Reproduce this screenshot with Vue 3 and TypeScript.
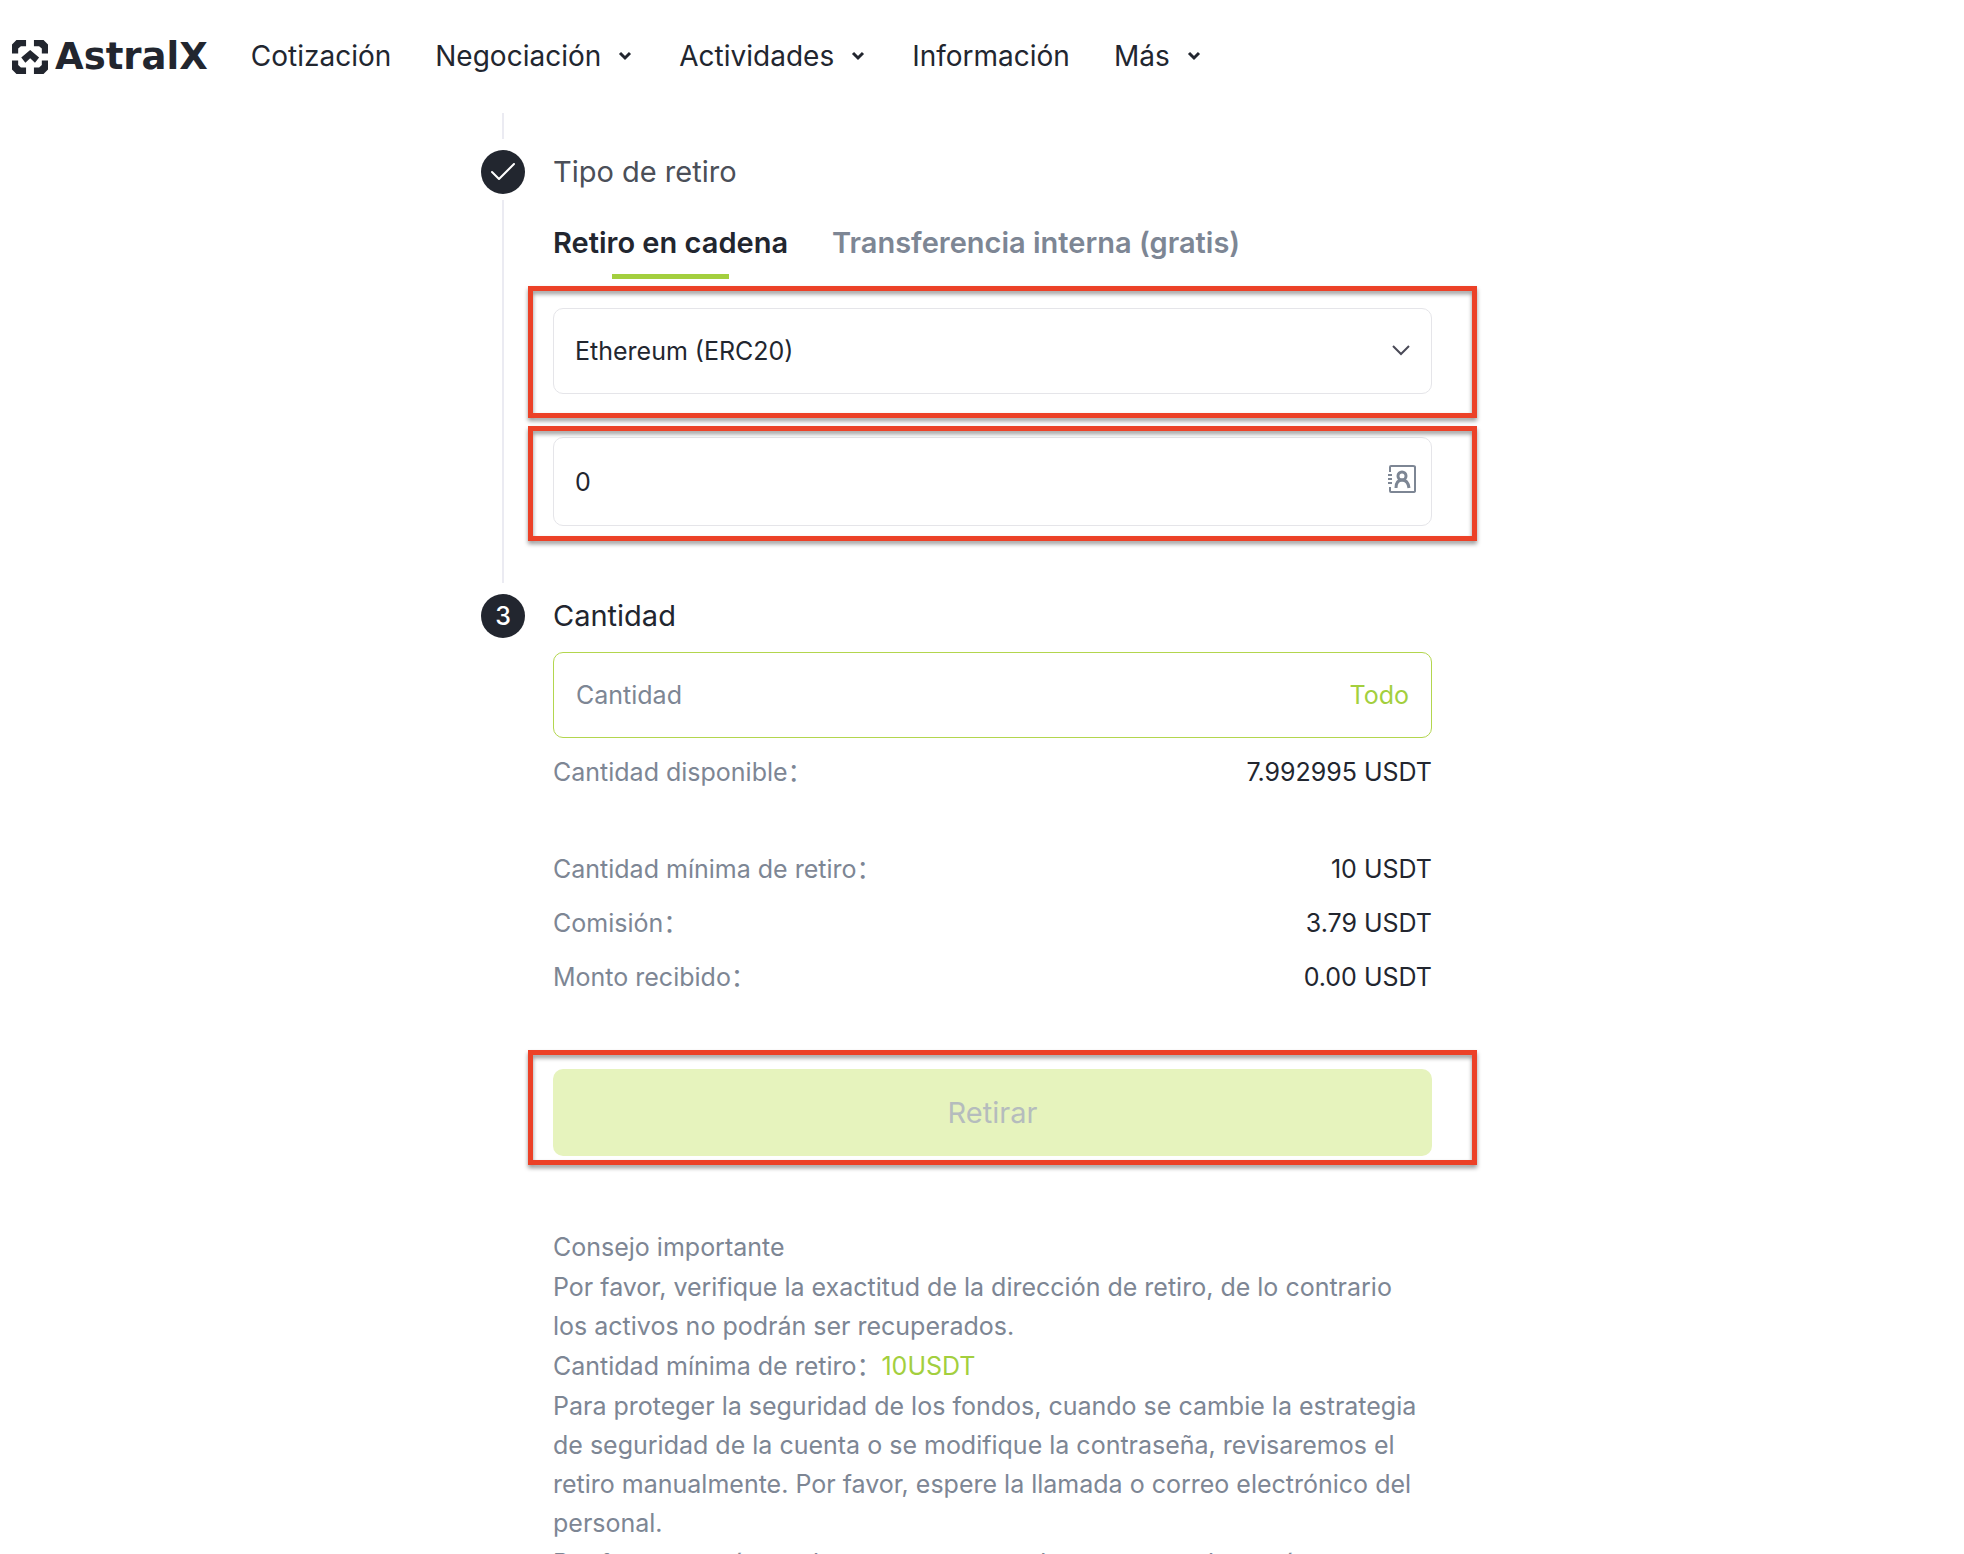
<script setup lang="ts">
import { ref } from 'vue'

interface NavItem {
  label: string
  menu: boolean
}

interface SummaryRow {
  label: string
  value: string
}

const navItems: NavItem[] = [
  { label: 'Cotización', menu: false },
  { label: 'Negociación', menu: true },
  { label: 'Actividades', menu: true },
  { label: 'Información', menu: false },
  { label: 'Más', menu: true },
]

const tabs: string[] = ['Retiro en cadena', 'Transferencia interna (gratis)']
const activeTab = ref(0)

const network = ref('Ethereum (ERC20)')
const address = ref('0')
const amount = ref('')

const available: SummaryRow = { label: 'Cantidad disponible：', value: '7.992995 USDT' }
const summary: SummaryRow[] = [
  { label: 'Cantidad mínima de retiro：', value: '10 USDT' },
  { label: 'Comisión：', value: '3.79 USDT' },
  { label: 'Monto recibido：', value: '0.00 USDT' },
]
</script>

<template>
  <div class="page">
    <header class="header">
      <a href="#" class="brand">
        <svg class="brand-mark" viewBox="39 63 105 99" aria-hidden="true">
          <path d="M39 76 52 63H80V81H65L57 88V102H39Z" />
          <path d="M144 76 131 63H103V81H118L126 88V102H144Z" />
          <path d="M39 149 52 162H80V143H65L57 136V123H39Z" />
          <path d="M144 149 131 162H103V143H118L126 136V123H144Z" />
          <path d="M92 92 118 114 106 129 92 116 78 129 66 114Z" />
        </svg>
        <span class="brand-name">AstralX</span>
      </a>
      <nav class="nav">
        <template v-for="item in navItems" :key="item.label">
          <button v-if="item.menu" type="button" class="nav-item">
            {{ item.label }}
            <svg class="nav-caret" viewBox="0 0 18 10" aria-hidden="true">
              <path d="M3 2 8 7 13 2" />
            </svg>
          </button>
          <a v-else href="#" class="nav-item">{{ item.label }}</a>
        </template>
      </nav>
    </header>

    <main class="steps">
      <div class="step">
        <div class="rail"><span class="rail-stub"></span></div>
      </div>

      <section class="step">
        <div class="rail">
          <span class="dot">
            <svg class="dot-check" viewBox="0 0 24 18" aria-label="Completado">
              <path d="M1 9 8 16 23 1" />
            </svg>
          </span>
          <span class="rail-line"></span>
        </div>
        <div class="step-body">
          <h2 class="step-title done">Tipo de retiro</h2>
          <div class="tabs" role="tablist">
            <button
              v-for="(tab, i) in tabs"
              :key="tab"
              type="button"
              role="tab"
              class="tab"
              :class="{ active: i === activeTab }"
              :aria-selected="i === activeTab"
              @click="activeTab = i"
            >
              {{ tab }}
            </button>
          </div>
          <div class="marked marked-network">
            <select v-model="network" class="field" aria-label="Red">
              <option>Ethereum (ERC20)</option>
            </select>
            <svg class="select-caret" viewBox="0 0 18 12" aria-hidden="true">
              <path d="M1 2 9 10 17 2" />
            </svg>
          </div>
          <div class="marked marked-address">
            <input v-model="address" type="text" class="field field-tall" aria-label="Dirección" />
            <button type="button" class="book" aria-label="Libreta de direcciones">
              <svg viewBox="0 0 28 30" aria-hidden="true">
                <path d="M2 8V3Q2 2 3 2H25Q27 2 27 3V27Q27 28 25 28H3Q2 28 2 27V23" />
                <path d="M0 11H4M0 15H4M0 19H4" />
                <g class="book-person">
                  <circle cx="14" cy="12" r="4" />
                  <path d="M8 24Q8 16 14 16T21 24" />
                </g>
              </svg>
            </button>
          </div>
        </div>
      </section>

      <section class="step">
        <div class="rail"><span class="dot">3</span></div>
        <div class="step-body">
          <h2 class="step-title">Cantidad</h2>
          <div class="amount">
            <input
              v-model="amount"
              type="text"
              class="amount-input"
              placeholder="Cantidad"
              aria-label="Cantidad"
            />
            <button type="button" class="all">Todo</button>
          </div>
          <dl class="summary summary-first">
            <div class="row">
              <dt>{{ available.label }}</dt>
              <dd>{{ available.value }}</dd>
            </div>
          </dl>
          <dl class="summary">
            <div v-for="row in summary" :key="row.label" class="row">
              <dt>{{ row.label }}</dt>
              <dd>{{ row.value }}</dd>
            </div>
          </dl>
          <div class="marked marked-submit">
            <button type="button" class="submit" disabled>Retirar</button>
          </div>
          <div class="tips">
            <p>Consejo importante</p>
            <p>
              Por favor, verifique la exactitud de la dirección de retiro, de lo contrario los
              activos no podrán ser recuperados.
            </p>
            <p>Cantidad mínima de retiro：<span class="accent">10USDT</span></p>
            <p>
              Para proteger la seguridad de los fondos, cuando se cambie la estrategia de seguridad
              de la cuenta o se modifique la contraseña, revisaremos el retiro manualmente. Por
              favor, espere la llamada o correo electrónico del personal.
            </p>
            <p>Por favor, asegúrese de que su computadora y navegador estén seguros.</p>
          </div>
        </div>
      </section>
    </main>
  </div>
</template>

<style>
body {
  margin: 0;
  background: #fff;
}
</style>

<style scoped>
.page {
  height: 100vh;
  overflow: hidden;
  color: #22262f;
  font-family: Inter, 'Noto Sans CJK SC', sans-serif;
  font-size: 25px;
}

.page *,
.page *::after {
  box-sizing: border-box;
}

button,
input,
select {
  margin: 0;
  padding: 0;
  border: 0;
  background: none;
  color: inherit;
  font: inherit;
}

a {
  color: inherit;
  text-decoration: none;
}

.header {
  display: flex;
  align-items: center;
  height: 113px;
  padding: 0 12px;
}

.brand {
  display: flex;
  align-items: center;
  gap: 7px;
  margin-right: 43px;
}

.brand-mark {
  width: 36px;
  height: 34px;
  fill: #22262f;
}

.brand-name {
  font-family: 'DejaVu Sans', sans-serif;
  font-size: 37px;
  font-weight: 700;
  line-height: 44px;
}

.nav {
  display: flex;
  align-items: center;
  gap: 44px;
  padding-bottom: 2px;
}

.nav-item {
  display: flex;
  align-items: center;
  gap: 16px;
  font-size: 28px;
  line-height: 44px;
}

.nav-caret {
  width: 18px;
  height: 10px;
  fill: none;
  stroke: #22262f;
  stroke-width: 3;
}

.steps {
  max-width: 1002px;
  margin: 0 auto;
  padding-right: 51px;
}

.step {
  display: flex;
  gap: 28px;
}

.rail {
  display: flex;
  flex: none;
  flex-direction: column;
  align-items: center;
  width: 44px;
}

.rail-stub {
  width: 2px;
  height: 26px;
  margin-bottom: 11px;
  background: #ebebf2;
}

.rail-line {
  flex: 1;
  width: 2px;
  margin: 6px 0 11px;
  background: #ebebf2;
}

.dot {
  display: flex;
  align-items: center;
  justify-content: center;
  width: 44px;
  height: 44px;
  border-radius: 50%;
  background: #22262f;
  color: #fff;
  font-weight: 500;
}

.dot-check {
  width: 24px;
  height: 18px;
  fill: none;
  stroke: #fff;
  stroke-width: 2;
  stroke-linecap: round;
  stroke-linejoin: round;
}

.step-body {
  flex: 1;
  min-width: 0;
}

.step-title {
  margin: 0;
  font-size: 29px;
  font-weight: 400;
  line-height: 44px;
}

.step-title.done {
  color: #4b4f58;
}

.tabs {
  display: flex;
  gap: 44px;
  margin: 27px 0 29px;
}

.tab {
  position: relative;
  height: 58px;
  padding-bottom: 14px;
  color: #7d8694;
  font-size: 29px;
  font-weight: 600;
  line-height: 44px;
}

.tab.active {
  color: #22262f;
}

.tab.active::after {
  content: '';
  position: absolute;
  right: 25%;
  bottom: 0;
  left: 25%;
  height: 5px;
  background: #a3cf3e;
}

.marked {
  position: relative;
}

.marked::after {
  content: '';
  position: absolute;
  right: -45px;
  left: -25px;
  border: 5px solid #ec4127;
  filter: drop-shadow(0 3px 2px rgba(0, 0, 0, 0.4));
  pointer-events: none;
}

.marked-network::after {
  top: -22px;
  bottom: -24px;
}

.marked-address {
  margin: 43px 0 68px;
}

.marked-address::after {
  top: -11px;
  bottom: -15px;
}

.marked-submit {
  margin: 65px 0 72px;
}

.marked-submit::after {
  top: -19px;
  bottom: -9px;
}

.field {
  display: block;
  width: 100%;
  height: 86px;
  padding: 0 64px 0 21px;
  border: 1px solid #e5e5e9;
  border-radius: 10px;
  appearance: none;
}

.field-tall {
  height: 89px;
}

.select-caret {
  position: absolute;
  top: 36px;
  right: 22px;
  width: 18px;
  height: 12px;
  fill: none;
  stroke: #4a4a57;
  stroke-width: 2;
  pointer-events: none;
}

.book {
  position: absolute;
  top: 27px;
  right: 16px;
  width: 28px;
  height: 30px;
}

.book svg {
  display: block;
  fill: none;
  stroke: #7d8694;
  stroke-width: 2;
}

.book-person {
  stroke-width: 3;
}

.amount {
  display: flex;
  align-items: center;
  height: 86px;
  margin-top: 14px;
  padding: 0 22px;
  border: 1px solid #b3d64e;
  border-radius: 10px;
}

.amount-input {
  flex: 1;
  min-width: 0;
  outline: none;
}

.amount-input::placeholder {
  color: #7d8694;
  opacity: 1;
}

.all,
.accent {
  color: #a3cf3e;
}

.summary {
  margin: 0;
}

.summary-first {
  margin: 7px 0 43px;
}

.row {
  display: flex;
  justify-content: space-between;
  line-height: 54px;
}

.row dt {
  color: #7d8694;
}

.row dd {
  margin: 0;
}

.submit {
  display: block;
  width: 100%;
  height: 87px;
  border-radius: 10px;
  background: #e6f3bd;
  color: #b5bcbd;
  font-size: 29px;
}

.tips {
  display: flex;
  flex-direction: column;
  gap: 1px;
  color: #7d8694;
  line-height: 39px;
}

.tips p {
  margin: 0;
}
</style>
